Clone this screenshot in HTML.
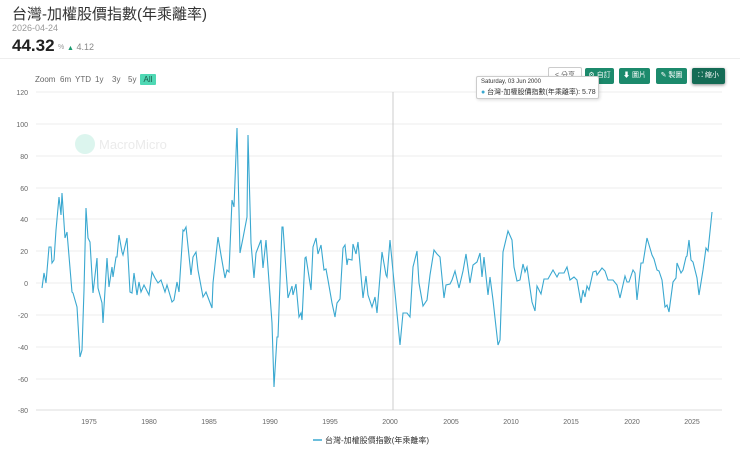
<!DOCTYPE html>
<html><head><meta charset="utf-8"><style>
body{margin:0;width:740px;height:456px;background:#fff;font-family:"Liberation Sans","Noto Sans CJK TC",sans-serif;position:relative;overflow:hidden}
.a{position:absolute;white-space:nowrap}
.r{position:absolute;top:75px;font-size:8px;color:#666}
.btn{position:absolute;top:68px;height:16px;border-radius:2px;background:#1c8a6c;color:#fff;font-size:7px;line-height:16px;text-align:center}
</style></head><body>
<div class="a" style="left:12px;top:3px;font-size:15px;color:#333">台灣-加權股價指數(年乘離率)</div>
<div class="a" style="left:12px;top:23px;font-size:9px;color:#999">2026-04-24</div>
<div class="a" style="left:12px;top:36px;font-size:17px;font-weight:bold;color:#222">44.32</div>
<div class="a" style="left:58px;top:44px;font-size:7px;color:#999">%</div>
<div class="a" style="left:67px;top:42px;font-size:9px;color:#888"><span style="color:#1a9a6e;font-size:7px">▲</span> 4.12</div>
<div class="a" style="left:0;top:58px;width:740px;height:1px;background:#eee"></div>

<div class="r" style="left:35px">Zoom</div>
<div class="r" style="left:60px">6m</div>
<div class="r" style="left:75px">YTD</div>
<div class="r" style="left:95px">1y</div>
<div class="r" style="left:112px">3y</div>
<div class="r" style="left:128px">5y</div>
<div class="a" style="left:140px;top:74px;width:16px;height:11px;background:#4fd8b4;font-size:8px;color:#1a5a4a;text-align:center;line-height:11px;border-radius:1px">All</div>

<div class="btn" style="left:548px;width:32px;background:#fff;border:1px solid #ccc;color:#666;top:67px">&lt; 分享</div>
<div class="btn" style="left:585px;width:29px">⚙ 自訂</div>
<div class="btn" style="left:619px;width:31px">⬇ 圖片</div>
<div class="btn" style="left:656px;width:31px">✎ 製圖</div>
<div class="btn" style="left:692px;width:33px;background:#146b55;box-shadow:0 1px 3px #888">⛶ 縮小</div>

<svg class="a" style="left:0;top:0" width="740" height="456">
<g stroke="#eee" stroke-width="1">
<line x1="36" x2="722" y1="92" y2="92"/><line x1="36" x2="722" y1="124" y2="124"/><line x1="36" x2="722" y1="156" y2="156"/><line x1="36" x2="722" y1="188" y2="188"/><line x1="36" x2="722" y1="219" y2="219"/><line x1="36" x2="722" y1="251" y2="251"/><line x1="36" x2="722" y1="283" y2="283"/><line x1="36" x2="722" y1="315" y2="315"/><line x1="36" x2="722" y1="347" y2="347"/><line x1="36" x2="722" y1="379" y2="379"/><line x1="36" x2="722" y1="410" y2="410" stroke="#ddd"/>
</g>
<line x1="393" x2="393" y1="92" y2="410" stroke="#ccc"/>
<g font-size="7" fill="#666" text-anchor="end" font-family="Liberation Sans">
<text x="28" y="95">120</text><text x="28" y="127">100</text><text x="28" y="159">80</text><text x="28" y="191">60</text><text x="28" y="222">40</text><text x="28" y="254">20</text><text x="28" y="286">0</text><text x="28" y="318">-20</text><text x="28" y="350">-40</text><text x="28" y="382">-60</text><text x="28" y="413">-80</text>
</g>
<g font-size="7" fill="#666" text-anchor="middle" font-family="Liberation Sans">
<text x="89" y="424">1975</text><text x="149" y="424">1980</text><text x="209" y="424">1985</text><text x="270" y="424">1990</text><text x="330" y="424">1995</text><text x="390" y="424">2000</text><text x="451" y="424">2005</text><text x="511" y="424">2010</text><text x="571" y="424">2015</text><text x="632" y="424">2020</text><text x="692" y="424">2025</text>
</g>
<circle cx="85" cy="144" r="10" fill="#dcf5ee"/>
<text x="99" y="149" font-size="13" fill="#ebebeb" font-family="Liberation Sans">MacroMicro</text>
<polyline fill="none" stroke="#3aa8d0" stroke-width="1.1" points="42,288 44,273 46,283 49,247 51,247 52,263 54,260 56,230 59,197 61,215 62,193 65,238 67,232 72,292 73,293 77,307 80,357 82,350 84,290 86,208 88,238 90,242 93,293 97,258 98,288 102,303 103,323 107,258 109,287 112,267 113,277 116,257 117,257 119,235 122,252 123,255 127,238 130,292 132,293 134,273 137,295 139,282 141,292 144,285 149,295 152,272 155,278 158,283 161,280 165,292 167,285 172,302 174,300 177,282 179,292 183,230 184,231 186,227 191,275 193,257 196,252 198,270 203,297 206,292 212,308 213,283 218,237 221,255 225,278 227,270 229,272 232,200 234,207 237,128 240,253 243,238 247,217 248,135 251,243 254,278 256,253 261,240 263,268 266,240 272,323 274,387 277,337 278,337 282,227 283,227 286,270 288,298 292,286 293,295 296,284 299,317 301,313 302,320 305,258 306,257 311,290 313,247 316,238 318,254 321,245 324,270 326,269 328,280 332,303 335,317 337,303 340,299 343,248 345,245 347,265 348,259 352,260 353,244 356,254 358,242 363,298 366,276 368,295 372,307 375,297 377,313 382,252 386,275 387,277 390,240 400,345 403,313 407,313 410,317 413,267 417,251 419,283 423,306 427,300 430,275 434,250 437,254 440,257 444,298 446,285 450,284 452,280 455,271 459,288 463,271 466,254 470,283 473,265 477,262 480,253 482,277 484,257 488,295 490,277 493,300 498,345 500,340 503,252 508,231 512,240 514,267 517,281 520,280 523,264 525,272 527,267 532,302 535,311 537,286 541,294 544,279 548,279 553,270 557,277 559,273 564,273 567,267 570,280 574,277 577,280 581,303 583,290 585,297 587,286 589,290 593,272 596,271 597,275 602,268 605,271 608,280 613,280 617,285 620,298 625,276 627,282 629,282 633,270 635,273 637,300 641,263 643,263 647,238 652,255 654,259 657,270 659,271 662,280 665,307 667,305 669,312 673,282 676,278 677,263 681,273 683,270 686,257 687,256 689,240 691,260 693,262 697,278 699,295 703,270 706,248 708,251 712,212"/>
<line x1="313" x2="322" y1="440" y2="440" stroke="#3aa8d0" stroke-width="1.5"/>
<text x="325" y="443" font-size="8" fill="#333" font-family="Liberation Sans,Noto Sans CJK TC,sans-serif">台灣-加權股價指數(年乘離率)</text>
</svg>

<div class="a" style="left:476px;top:76px;width:121px;height:21px;background:#fff;border:1px solid #ccc;border-radius:2px;box-shadow:1px 1px 3px rgba(0,0,0,.15)">
<div class="a" style="left:4px;top:2px;font-size:6px;color:#333">Saturday, 03 Jun 2000</div>
<div class="a" style="left:4px;top:10px;font-size:7px;color:#333"><span style="color:#3aa8d0">●</span> 台灣-加權股價指數(年乘離率): 5.78</div>
</div>
</body></html>
